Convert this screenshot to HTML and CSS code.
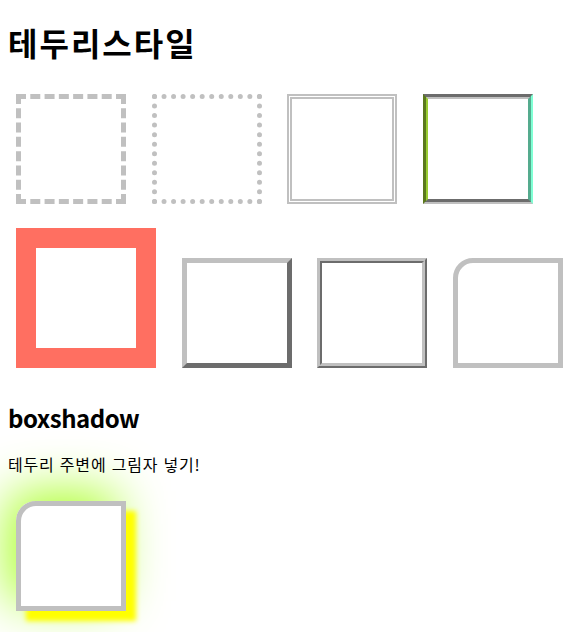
FILE: index.html
```html
<!DOCTYPE html>
<html lang="ko">
<head>
<meta charset="utf-8">
<title>테두리스타일</title>
<link rel="stylesheet" href="styles.css">
</head>
<body>
<h1 class="title">테두리스타일</h1>
<div class="boxes">
  <div class="box dashed"></div>
  <div class="box dotted"></div>
  <div class="box double"></div>
  <div class="box groove"></div>
  <div class="box thick"></div>
  <div class="box outset"></div>
  <div class="box ridge"></div>
  <div class="box rounded"></div>
</div>
<h2 class="subtitle">boxshadow</h2>
<p class="desc">테두리 주변에 그림자 넣기!</p>
<div class="box shadow"></div>
</body>
</html>
```

FILE: styles.css
```css
html, body {
  background: #ffffff;
}
body {
  margin: 0;
  padding: 0 8px 40px;
  color: #000000;
  font-family: "Noto Sans CJK KR", "Noto Sans", sans-serif;
}
.title {
  margin: 21px 0 0;
  font-size: 32px;
  line-height: 43px;
  font-weight: 700;
  letter-spacing: 2px;
}
.boxes {
  display: flex;
  flex-wrap: wrap;
  align-items: flex-end;
  row-gap: 24px;
  column-gap: 25.6px;
  margin-top: 30px;
  padding-left: 8px;
}
.box {
  width: 100px;
  height: 100px;
  flex: none;
  border: 5px solid #c0c0c0;
}
.dashed { border-style: dashed; }
.dotted { border-style: dotted; }
.double { border-style: double; }
.groove {
  border-style: groove;
  border-color: #c0c0c0 #7fffd4 #c0c0c0 #9acd32;
}
.thick {
  border-width: 20px;
  border-color: #ff6f61;
}
.outset { border-style: outset; }
.ridge { border-style: ridge; }
.rounded { border-top-left-radius: 20px; }
.subtitle {
  margin: 34px 0 0;
  font-size: 24px;
  line-height: 32px;
  font-weight: 700;
  letter-spacing: -0.5px;
}
.desc {
  margin: 18px 0 0;
  font-size: 16px;
  line-height: 24px;
  letter-spacing: 0.8px;
}
.shadow {
  margin: 25px 0 0 8px;
  border-top-left-radius: 20px;
  box-shadow: 10px 10px 5px #ffff00, -10px -10px 50px #adff2f;
}
```
